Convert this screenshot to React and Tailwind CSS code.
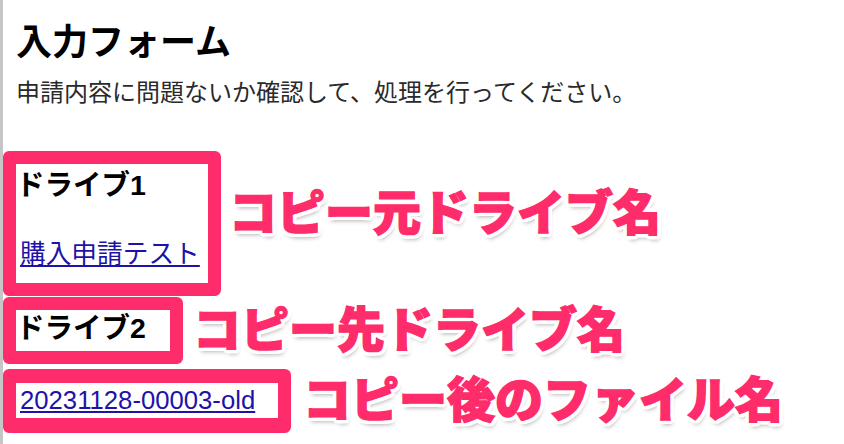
const boxBorder = "border-[13px] border-[#ff2c6b] rounded-[6px] bg-white";

function Note({ children }) {
  return (
    <span className="whitespace-nowrap text-[48px] leading-[56px] font-black text-[#ff2c6b] [-webkit-text-stroke:1.5px_#ff2c6b] [text-shadow:4px_0_0_#fff,-4px_0_0_#fff,0_4px_0_#fff,0_-4px_0_#fff,3px_3px_0_#fff,-3px_3px_0_#fff,3px_-3px_0_#fff,-3px_-3px_0_#fff,4px_2px_0_#fff,4px_-2px_0_#fff,-4px_2px_0_#fff,-4px_-2px_0_#fff,2px_4px_0_#fff,-2px_4px_0_#fff,2px_-4px_0_#fff,-2px_-4px_0_#fff,2px_5px_4px_rgba(0,0,0,0.3)]">
      {children}
    </span>
  );
}

function App() {
  return (
    <main className="min-h-screen border-l-[3px] border-[#c6c6c6] bg-white text-black font-['Liberation_Sans','Noto_Sans_CJK_JP',sans-serif]">
      <div className="pl-[13px] pt-[21px]">
        <h1 className="text-[36px] font-bold leading-[44px]">入力フォーム</h1>
        <p className="mt-[12px] text-[24px] leading-[32px] text-[#2a2a2a]">
          申請内容に問題ないか確認して、処理を行ってください。
        </p>
      </div>

      <div className="mt-[42px] flex flex-col">
        <div className="flex items-start gap-[8px]">
          <div className={`${boxBorder} h-[145px] w-[218px]`}>
            <h2 className="pt-[3px] text-[28.5px] font-bold leading-[36px]">
              ドライブ1
            </h2>
            <a
              href="#"
              className="mt-[35px] block pl-[4px] text-[25.7px] leading-[32px] text-[#1e12a8] underline"
            >
              購入申請テスト
            </a>
          </div>
          <div className="mt-[35px]">
            <Note>コピー元ドライブ名</Note>
          </div>
        </div>

        <div className="mt-[1px] flex items-center gap-[10px]">
          <div className={`${boxBorder} h-[67px] w-[180px]`}>
            <h2 className="text-[28.5px] font-bold leading-[36px]">ドライブ2</h2>
          </div>
          <Note>コピー先ドライブ名</Note>
        </div>

        <div className="mt-[5px] flex items-center gap-[12px]">
          <div className={`${boxBorder} h-[64px] w-[288px] border-t-[14px] border-b-[15px]`}>
            <a
              href="#"
              className="block pl-[4px] text-[25.7px] leading-[35px] text-[#1e12a8] underline"
            >
              20231128-00003-old
            </a>
          </div>
          <Note>コピー後のファイル名</Note>
        </div>
      </div>
    </main>
  );
}

export default App;
